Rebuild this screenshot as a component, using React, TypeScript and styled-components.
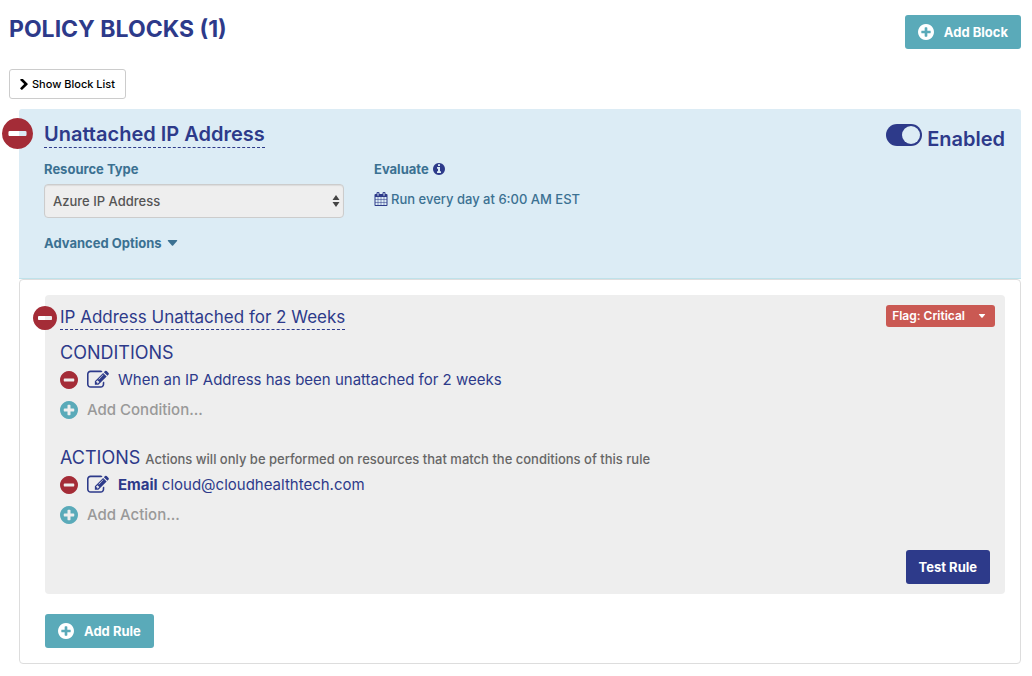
import React from "react";
import styled, { createGlobalStyle } from "styled-components";

const color = {
  navy: "#2d3a8a",
  steel: "#3b7192",
  sky: "#dcecf5",
  teal: "#5aaab9",
  red: "#a42c37",
  coral: "#ca5953",
  grey: "#eeeeee",
  line: "#dddddd",
};

const GlobalStyle = createGlobalStyle`
  *, *::before, *::after { box-sizing: border-box; }
  body {
    margin: 0;
    background: #fff;
    color: ${color.navy};
    font-family: Inter, "Liberation Sans", sans-serif;
    font-size: 13px;
    line-height: 20px;
  }
  button, select, input { font: inherit; }
  h1, h2, h3, h4, p, ul { margin: 0; padding: 0; }
`;

const CIRCLE =
  "M1664 896q0 209-103 385.5t-279.5 279.5-385.5 103-385.5-103-279.5-279.5-103-385.5 103-385.5 279.5-279.5 385.5-103 385.5 103 279.5 279.5 103 385.5z";

const glyphs = {
  minus: {
    box: "128 128 1536 1536",
    d: "M1344 960v-128q0-26-19-45t-45-19h-768q-26 0-45 19t-19 45v128q0 26 19 45t45 19h768q26 0 45-19t19-45z" + CIRCLE,
  },
  plus: {
    box: "128 128 1536 1536",
    d: "M1344 960v-128q0-26-19-45t-45-19h-256v-256q0-26-19-45t-45-19h-128q-26 0-45 19t-19 45v256h-256q-26 0-45 19t-19 45v128q0 26 19 45t45 19h256v256q0 26 19 45t45 19h128q26 0 45-19t19-45v-256h256q26 0 45-19t19-45z" + CIRCLE,
  },
  info: {
    box: "128 128 1536 1536",
    d: "M1152 1376v-160q0-14-9-23t-23-9h-96v-512q0-14-9-23t-23-9h-320q-14 0-23 9t-9 23v160q0 14 9 23t23 9h96v320h-96q-14 0-23 9t-9 23v160q0 14 9 23t23 9h448q14 0 23-9t9-23zm-128-896v-160q0-14-9-23t-23-9h-192q-14 0-23 9t-9 23v160q0 14 9 23t23 9h192q14 0 23-9t9-23z" + CIRCLE,
  },
  edit: {
    box: "0 0 1792 1792",
    d: "M888 1184l116-116-152-152-116 116v56h96v96h56zm440-720q-16-16-33 1l-350 350q-17 17-1 33t33-1l350-350q17-17 1-33zm80 594v190q0 119-84.5 203.5t-203.5 84.5h-832q-119 0-203.5-84.5t-84.5-203.5v-832q0-119 84.5-203.5t203.5-84.5h832q63 0 117 25 15 7 18 23 3 17-9 29l-49 49q-14 14-32 8-23-6-45-6h-832q-66 0-113 47t-47 113v832q0 66 47 113t113 47h832q66 0 113-47t47-113v-126q0-13 9-22l64-64q15-15 35-7t20 29zm-96-738l288 288-672 672h-288v-288zm444 132l-92 92-288-288 92-92q28-28 68-28t68 28l152 152q28 28 28 68t-28 68z",
  },
  calendar: {
    box: "0 0 1792 1792",
    d: "M192 1664h288v-288h-288v288zm352 0h320v-288h-320v288zm-352-352h288v-320h-288v320zm352 0h320v-320h-320v320zm-352-384h288v-288h-288v288zm736 736h320v-288h-320v288zm-384-736h320v-288h-320v288zm768 736h288v-288h-288v288zm-384-352h320v-320h-320v320zm-352-864v-288q0-13-9.5-22.5t-22.5-9.5h-64q-13 0-22.5 9.5t-9.5 22.5v288q0 13 9.5 22.5t22.5 9.5h64q13 0 22.5-9.5t9.5-22.5zm736 864h288v-320h-288v320zm-384-384h320v-288h-320v288zm384 0h288v-288h-288v288zm32-480v-288q0-13-9.5-22.5t-22.5-9.5h-64q-13 0-22.5 9.5t-9.5 22.5v288q0 13 9.5 22.5t22.5 9.5h64q13 0 22.5-9.5t9.5-22.5zm384-64v1280q0 52-38 90t-90 38h-1408q-52 0-90-38t-38-90v-1280q0-52 38-90t90-38h128v-96q0-66 47-113t113-47h64q66 0 113 47t47 113v96h384v-96q0-66 47-113t113-47h64q66 0 113 47t47 113v96h128q52 0 90 38t38 90z",
  },
  chevron: {
    box: "346 140 1036 1498",
    d: "M1363 877l-742 742q-19 19-45 19t-45-19l-166-166q-19-19-19-45t19-45l531-531-531-531q-19-19-19-45t19-45l166-166q19-19 45-19t45 19l742 742q19 19 19 45t-19 45z",
  },
  caret: { box: "0 0 10 6", d: "M0.8 0h8.4q0.8 0.2 0.4 0.9L5.6 5.5q-0.6 0.6-1.2 0L0.4 0.9Q0 0.2 0.8 0z" },
};

const Svg = styled.svg`
  display: block;
  flex: none;
  fill: currentColor;
`;

type IconProps = { name: keyof typeof glyphs; width: number; height?: number };

const Icon = ({ name, width, height = width }: IconProps) => (
  <Svg viewBox={glyphs[name].box} width={width} height={height} fillRule="evenodd" aria-hidden="true">
    <path d={glyphs[name].d} />
  </Svg>
);

const Page = styled.main`
  padding: 15px 11px 12px 9px;
`;

const PageHeader = styled.header`
  display: flex;
  justify-content: space-between;
  align-items: flex-start;
  margin-bottom: 20px;
`;

const PageTitle = styled.h1`
  font-size: 23px;
  line-height: 28px;
  font-weight: 700;
`;

const SolidButton = styled.button<{ $tone: string }>`
  display: inline-flex;
  align-items: center;
  gap: 10px;
  height: 34px;
  padding: 0 13px;
  border: 0;
  border-radius: 3px;
  background: ${(p) => p.$tone};
  color: #fff;
  font-weight: 700;
  white-space: nowrap;
`;

const OutlineButton = styled.button`
  display: inline-flex;
  align-items: center;
  gap: 4px;
  height: 30px;
  padding: 0 10px;
  border: 1px solid #cccccc;
  border-radius: 3px;
  background: #fff;
  color: #000;
  font-size: 11px;
  font-weight: 500;
`;

const Block = styled.section`
  position: relative;
  margin: 10px 0 0 10px;
`;

const IconButton = styled.button<{ $tone: string }>`
  display: inline-flex;
  padding: 0;
  border: 0;
  background: none;
  color: ${(p) => p.$tone};
`;

const BlockRemove = styled(IconButton)`
  position: absolute;
  top: 9px;
  left: -17px;
`;

const RuleRemove = styled(IconButton)`
  position: absolute;
  top: 11px;
  left: -12px;
`;

const BlockHeader = styled.header`
  padding: 12px 16px 25px 25px;
  border-bottom: 1px solid #bfe2ea;
  border-radius: 3px 3px 0 0;
  background: ${color.sky};
`;

const TitleRow = styled.div`
  display: flex;
  justify-content: space-between;
  align-items: flex-start;
`;

const BlockTitle = styled.h2`
  border-bottom: 1px dashed ${color.navy};
  font-size: 20px;
  line-height: 26px;
  font-weight: 600;
`;

const Toggle = styled.label`
  display: flex;
  align-items: flex-start;
  gap: 5px;
  padding-top: 3px;
  font-size: 20px;
  line-height: 30px;
  font-weight: 600;
`;

const Switch = styled.input`
  appearance: none;
  display: flex;
  justify-content: flex-end;
  width: 36px;
  height: 22px;
  margin: 0;
  padding: 2px;
  border-radius: 11px;
  background: ${color.navy};

  &::before {
    content: "";
    flex: none;
    width: 18px;
    height: 18px;
    border-radius: 50%;
    background: ${color.sky};
  }
`;

const Fields = styled.div`
  display: grid;
  grid-template-columns: minmax(0, 300px) 1fr;
  column-gap: 30px;
  padding-top: 5px;
  color: ${color.steel};
`;

const FieldLabel = styled.label`
  display: flex;
  align-items: center;
  gap: 4px;
  margin-bottom: 5px;
  font-weight: 700;
`;

const SelectBox = styled.div`
  position: relative;
`;

const Select = styled.select`
  appearance: none;
  display: block;
  width: 100%;
  height: 34px;
  padding: 0 8px;
  border: 1px solid #cccccc;
  border-radius: 4px;
  background: ${color.grey};
  box-shadow: inset 0 1px 1px rgba(0, 0, 0, 0.08);
  color: #555;
  font-weight: 500;
`;

const SelectArrows = styled(Svg)`
  position: absolute;
  top: 11px;
  right: 4px;
  color: #444;
  pointer-events: none;
`;

const Schedule = styled.p`
  display: flex;
  align-items: center;
  gap: 3px;
  padding-top: 5px;
  font-weight: 500;
`;

const ScheduleIcon = styled.span`
  color: ${color.navy};
`;

const TextButton = styled.button`
  display: inline-flex;
  align-items: center;
  gap: 5px;
  margin-top: 15px;
  padding: 0;
  border: 0;
  background: none;
  color: ${color.steel};
  font-weight: 700;
`;

const BlockBody = styled.div`
  padding: 15px 15px 15px 25px;
  border: 1px solid ${color.line};
  border-radius: 4px;
  background: #fff;
`;

const RuleCard = styled.article`
  position: relative;
  margin-bottom: 20px;
  padding: 10px 15px;
  border-radius: 4px;
  background: ${color.grey};
`;

const RuleTitle = styled.h3`
  border-bottom: 1px dashed ${color.navy};
  font-size: 17px;
  line-height: 24px;
  font-weight: 400;
`;

const FlagButton = styled.button`
  display: inline-flex;
  align-items: center;
  gap: 13px;
  height: 22px;
  margin-right: -5px;
  padding: 0 9px 0 6px;
  border: 0;
  border-radius: 3px;
  background: ${color.coral};
  color: #fff;
  font-size: 12px;
  font-weight: 600;
`;

const RuleSection = styled.section`
  margin: 10px 0 20px;
`;

const SectionTitle = styled.h4`
  font-size: 18px;
  line-height: 25px;
  font-weight: 400;
`;

const Hint = styled.small`
  color: #666;
  font-size: 13px;
  line-height: 20px;
  font-weight: 500;
`;

const Lines = styled.ul`
  list-style: none;
`;

const Line = styled.li<{ $muted?: boolean }>`
  display: flex;
  align-items: center;
  gap: 9px;
  height: 30px;
  color: ${(p) => (p.$muted ? "#999" : color.navy)};
  font-size: 15px;
  font-weight: ${(p) => (p.$muted ? 500 : 400)};
`;

const CardFooter = styled.footer`
  display: flex;
  justify-content: flex-end;
`;

type SectionProps = { title: string; hint?: string; add: string; children: React.ReactNode };

const Section = ({ title, hint, add, children }: SectionProps) => (
  <RuleSection>
    <SectionTitle>
      {title} {hint && <Hint>{hint}</Hint>}
    </SectionTitle>
    <Lines>
      <Line>
        <IconButton $tone={color.red} aria-label="Remove">
          <Icon name="minus" width={18} />
        </IconButton>
        <IconButton $tone={color.navy} aria-label="Edit">
          <Icon name="edit" width={22} />
        </IconButton>
        <span>{children}</span>
      </Line>
      <Line $muted>
        <IconButton $tone={color.teal} aria-label={add}>
          <Icon name="plus" width={18} />
        </IconButton>
        <span>{add}...</span>
      </Line>
    </Lines>
  </RuleSection>
);

export default function App() {
  return (
    <>
      <GlobalStyle />
      <Page>
        <PageHeader>
          <PageTitle>POLICY BLOCKS (1)</PageTitle>
          <SolidButton $tone={color.teal}>
            <Icon name="plus" width={16} />
            Add Block
          </SolidButton>
        </PageHeader>
        <OutlineButton>
          <Icon name="chevron" width={8} height={11} />
          Show Block List
        </OutlineButton>

        <Block>
          <BlockHeader>
            <TitleRow>
              <BlockTitle>Unattached IP Address</BlockTitle>
              <Toggle>
                <Switch type="checkbox" role="switch" defaultChecked />
                Enabled
              </Toggle>
            </TitleRow>
            <Fields>
              <div>
                <FieldLabel htmlFor="resource-type">Resource Type</FieldLabel>
                <SelectBox>
                  <Select id="resource-type">
                    <option>Azure IP Address</option>
                  </Select>
                  <SelectArrows viewBox="0 0 8 12" width={8} height={12} aria-hidden="true">
                    <path d="M4 0l3.5 5h-7zM4 12L0.5 7h7z" />
                  </SelectArrows>
                </SelectBox>
                <TextButton>
                  Advanced Options
                  <Icon name="caret" width={11} height={6} />
                </TextButton>
              </div>
              <div>
                <FieldLabel as="div">
                  Evaluate
                  <IconButton $tone={color.navy} aria-label="About evaluation">
                    <Icon name="info" width={12} />
                  </IconButton>
                </FieldLabel>
                <Schedule>
                  <ScheduleIcon>
                    <Icon name="calendar" width={14} />
                  </ScheduleIcon>
                  Run every day at 6:00 AM EST
                </Schedule>
              </div>
            </Fields>
          </BlockHeader>
          <BlockRemove $tone={color.red} aria-label="Remove block">
            <Icon name="minus" width={31} />
          </BlockRemove>

          <BlockBody>
            <RuleCard>
              <TitleRow>
                <RuleTitle>IP Address Unattached for 2 Weeks</RuleTitle>
                <FlagButton>
                  Flag: Critical
                  <Icon name="caret" width={8} height={4} />
                </FlagButton>
              </TitleRow>
              <RuleRemove $tone={color.red} aria-label="Remove rule">
                <Icon name="minus" width={24} />
              </RuleRemove>
              <Section title="CONDITIONS" add="Add Condition">
                When an IP Address has been unattached for 2 weeks
              </Section>
              <Section
                title="ACTIONS"
                hint="Actions will only be performed on resources that match the conditions of this rule"
                add="Add Action"
              >
                <b>Email</b> cloud@cloudhealthtech.com
              </Section>
              <CardFooter>
                <SolidButton $tone={color.navy}>Test Rule</SolidButton>
              </CardFooter>
            </RuleCard>
            <SolidButton $tone={color.teal}>
              <Icon name="plus" width={16} />
              Add Rule
            </SolidButton>
          </BlockBody>
        </Block>
      </Page>
    </>
  );
}
